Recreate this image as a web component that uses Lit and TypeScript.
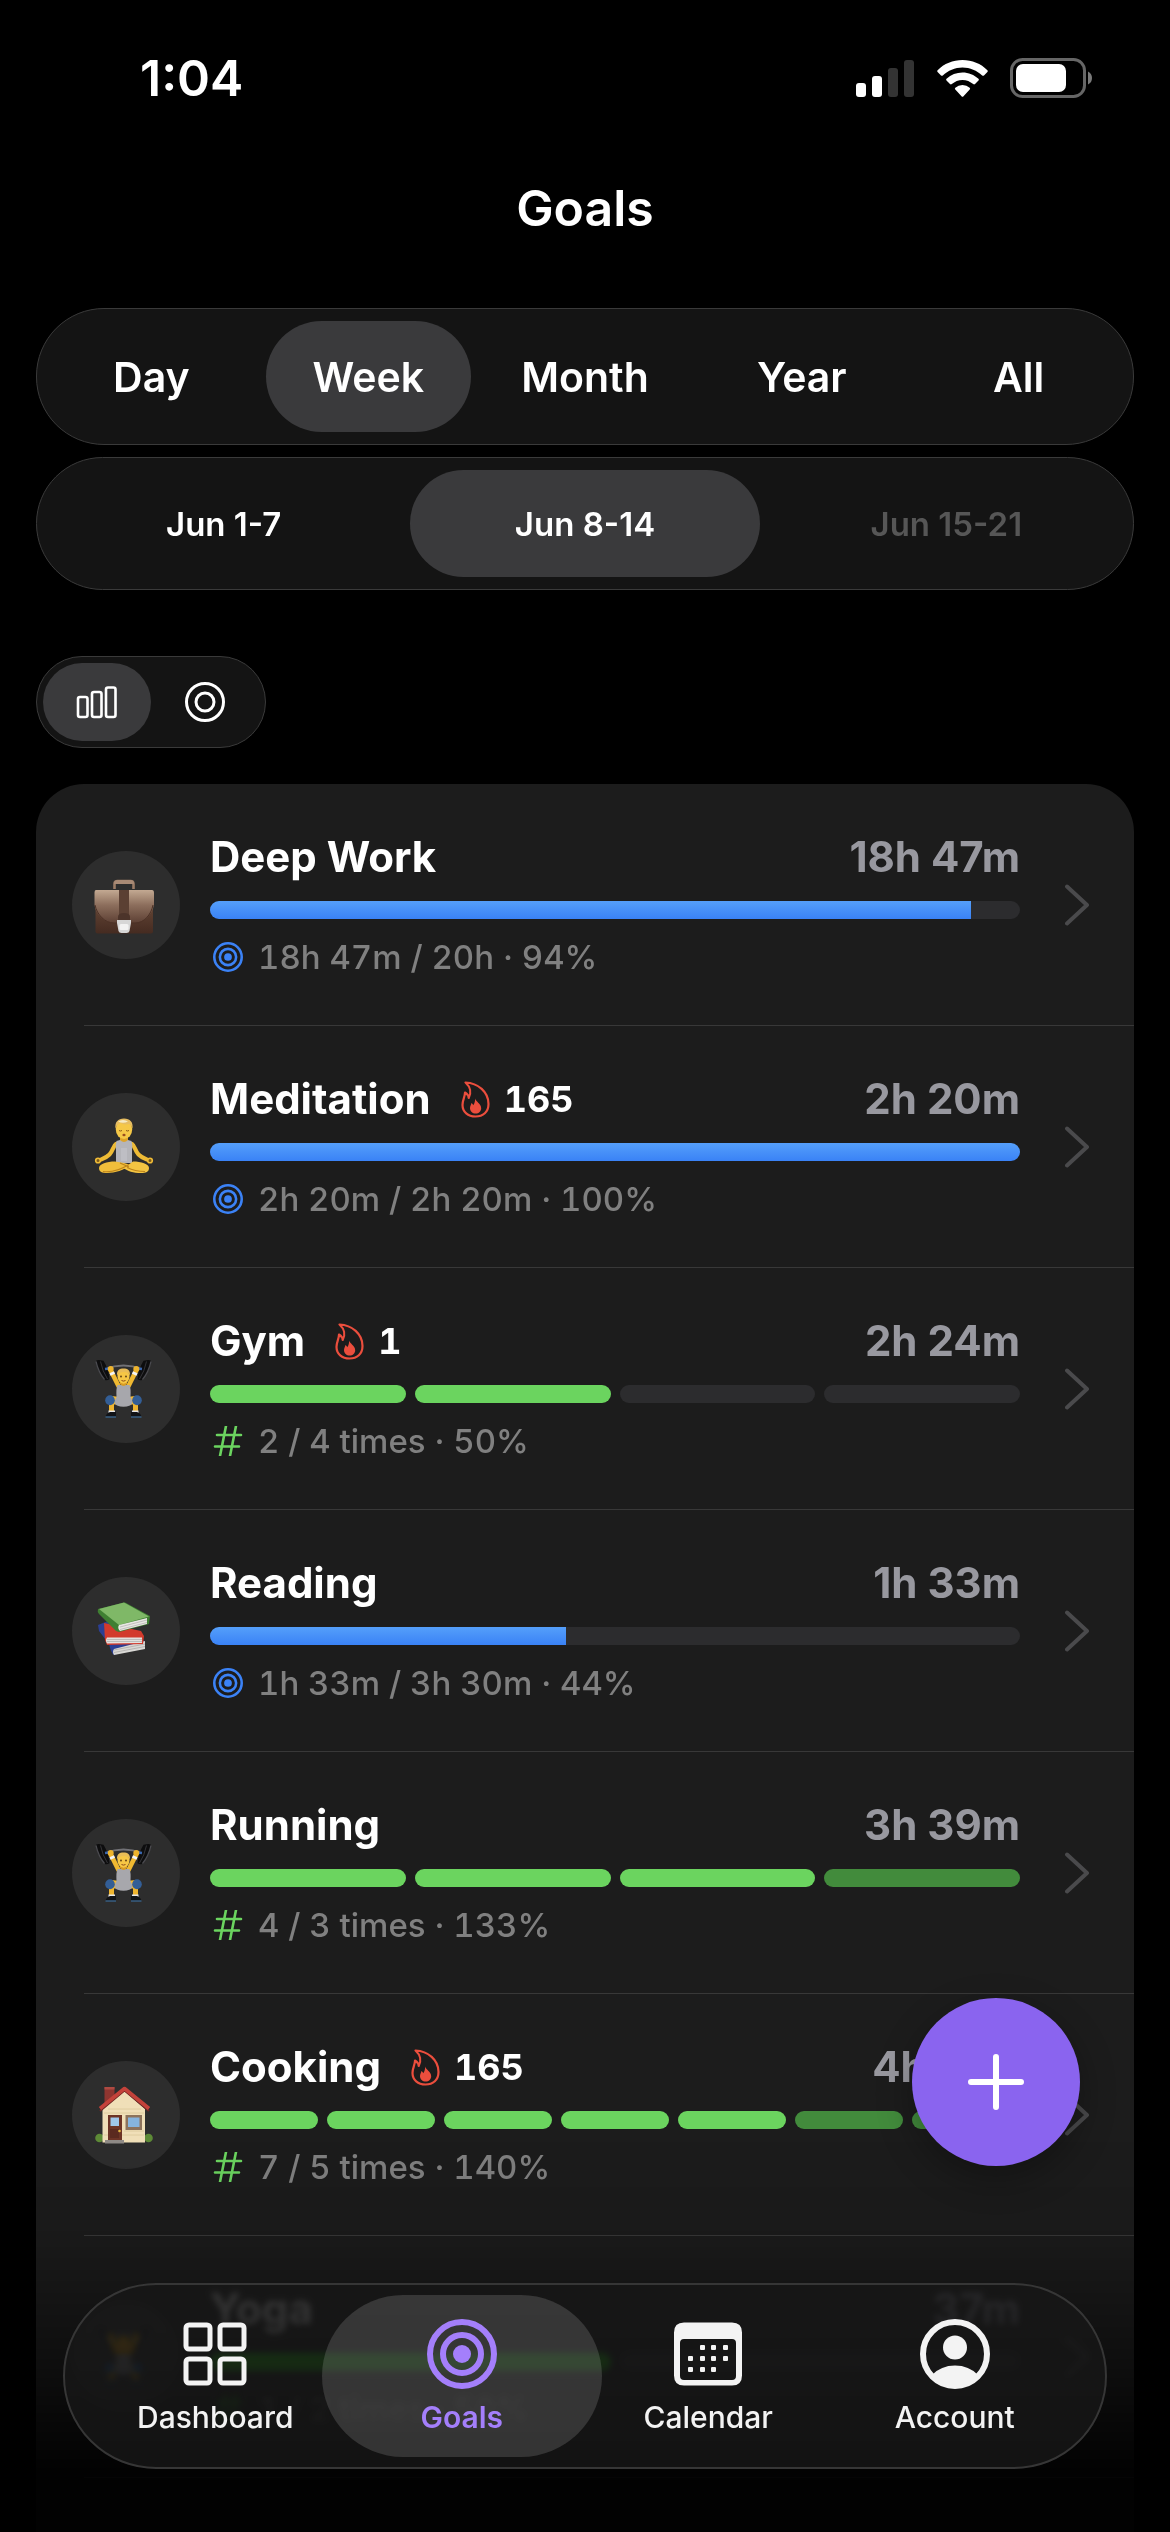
import { LitElement, html, css, svg } from 'lit';
import { customElement, property, state } from 'lit/decorators.js';
import { classMap } from 'lit/directives/class-map.js';

interface Goal {
    name: string;
    icon: string;
    total: string;
    detail: string;
    streak?: number;
    // time goals fill a single bar, count goals fill segments
    percent?: number;
    done?: number;
    target?: number;
}

const goals: Goal[] = [
    { name: 'Deep Work', icon: 'briefcase', total: '18h 47m', detail: '18h 47m / 20h · 94%', percent: 94 },
    { name: 'Meditation', icon: 'lotus', total: '2h 20m', detail: '2h 20m / 2h 20m · 100%', percent: 100, streak: 165 },
    { name: 'Gym', icon: 'lifter', total: '2h 24m', detail: '2 / 4 times · 50%', done: 2, target: 4, streak: 1 },
    { name: 'Reading', icon: 'books', total: '1h 33m', detail: '1h 33m / 3h 30m · 44%', percent: 44 },
    { name: 'Running', icon: 'lifter', total: '3h 39m', detail: '4 / 3 times · 133%', done: 4, target: 3 },
    { name: 'Cooking', icon: 'house', total: '4h 15m', detail: '7 / 5 times · 140%', done: 7, target: 5, streak: 165 },
    { name: 'Yoga', icon: 'lifter', total: '37m', detail: '1 / 2 times · 50%', done: 1, target: 2 },
];

const pictures: Record<string, unknown> = {
    briefcase: svg`
        <defs>
            <linearGradient id="flap" x1="0" y1="0" x2="0" y2="1">
                <stop offset="0" stop-color="#c3a992"/>
                <stop offset="0.45" stop-color="#8d6f5d"/>
                <stop offset="1" stop-color="#5d4034"/>
            </linearGradient>
            <linearGradient id="case" x1="0" y1="0" x2="0" y2="1">
                <stop offset="0" stop-color="#73523f"/>
                <stop offset="1" stop-color="#452b21"/>
            </linearGradient>
        </defs>
        <path d="M20.500 14V9q0-3 3-3h13q3 0 3 3v5" fill="none" stroke="#9c7c66" stroke-width="2.600"/>
        <path d="M20 9q0-4 4-4h12q4 0 4 4z" fill="#a88a75"/>
        <rect x="1.500" y="16" width="57.500" height="42.500" rx="2" fill="url(#case)"/>
        <path d="M2 15h56q2 0 2 3v12c-2 10-10 18-19 18H20C10 48 2 40 .500 30V18q0-3 1.500-3z" fill="url(#flap)"/>
        <path d="M1 30c2 10 10 18 19 18h21c9 0 16-8 18-18" fill="none" stroke="#4b3025" stroke-width="1"/>
        <path d="M25 15h10v26H25z" fill="#5b4033"/>
        <path d="M24 42q0-4 6-4t6 4v3H24z" fill="#4c342a"/>
        <path d="M23 45h14v3l-1.500 8q-.5 2-3 2h-5q-2.500 0-3-2L23 48z" fill="#d6d6d6"/>
        <rect x="25.500" y="49" width="9" height="6" rx="1.500" fill="#f2f2f2"/>`,
    lotus: svg`
        <path d="M22 27c-3 2-3 7-6.500 10.500C12 41 8 42 5 43.500M38 27c3 2 3 7 6.500 10.500C48 41 52 42 55 43.500" fill="none" stroke="#eebb35" stroke-width="4.200" stroke-linecap="round"/>
        <circle cx="4" cy="43.500" r="2.300" fill="#7b5a1c" stroke="#efbb36" stroke-width="1.600"/>
        <circle cx="56" cy="43.500" r="2.300" fill="#7b5a1c" stroke="#efbb36" stroke-width="1.600"/>
        <path d="M26 18h8v7q3 1 3 3H23q0-2 3-3z" fill="#dda32a"/>
        <path d="M22.500 24l3.500-1q4 4 8 0l3.500 1q1.500 4 .5 9v13H22V33q-1-5 .5-9z" fill="#b5b5ba"/>
        <path d="M27 31h6v13h-6z" fill="#c8c8cd" opacity=".5"/>
        <path d="M21 44.500C13 44.500 5 47 5 51c0 4 3 5 8 5 8 0 17-3 24-8l-7-2z" fill="#f0be3b"/>
        <path d="M39 44.500c8 0 16 2.500 16 6.500 0 4-3 5-8 5-8 0-13-2-18-5l5-3z" fill="#f4c542"/>
        <path d="M9 54.500c8 1 18-2 26-7M51 54.500c-7 0-12-1-18-4M26 46l9 4" fill="none" stroke="#bd831a" stroke-width="1.200"/>
        <ellipse cx="30" cy="12.500" rx="8.200" ry="9.500" fill="#f5c847"/>
        <path d="M21.500 12C20.500 5 24 1.500 30 1.500S39.500 5 38.500 12c-.5-3-2-5-4-5-3 1-6 0-8-1-3 1-4.500 3-5 6z" fill="#e6bd62"/>
        <path d="M24 4.500q5-3 10 0-5 2.500-10 0z" fill="#f7ebc4"/>
        <path d="M25 13.500q1.500 1 3 0M32 13.500q1.500 1 3 0" fill="none" stroke="#8a5a18" stroke-width="1"/>
        <ellipse cx="30" cy="18" rx="1.600" ry="1.300" fill="#9a4c1f"/>`,
    lifter: svg`
        <path d="M11 10Q29.500 3 48 10" fill="none" stroke="#717176" stroke-width="1.800"/>
        <path d="M2 1.700q2-1 4.500-.4l3 .4q5 8 6 18.500-2.500 1.500-4.500.8Q3 12 2 1.700zM57 1.700q-2-1-4.500-.4l-3 .4q-5 8-6 18.500 2.500 1.500 4.500.8Q56 12 57 1.700z" fill="#0d0d0e"/>
        <path d="M2 2.500q2.500 11 8.500 18M57 2.500q-2.500 11-8.500 18" fill="none" stroke="#4b4b50" stroke-width="1.200"/>
        <path d="M6.500 2.500q2 10 7 17.500M52.500 2.500q-2 10-7 17.500" fill="none" stroke="#343438" stroke-width="1"/>
        <path d="M11 10l4-.5M48 10l-4-.5" stroke="#3a67b0" stroke-width="2.400"/>
        <path d="M17 12l7.500 15M42 12l-7.500 15" stroke="#f0b931" stroke-width="4.600" stroke-linecap="round"/>
        <path d="M16 15.500l4.500-2M43 15.500l-4.500-2" stroke="#f4f4f6" stroke-width="2.600"/>
        <circle cx="16.700" cy="10" r="3" fill="#eeb42d"/>
        <circle cx="42.300" cy="10" r="3" fill="#eeb42d"/>
        <path d="M17.500 44v10M41.500 44v10" stroke="#efb52f" stroke-width="5"/>
        <path d="M17 41l9 1M42 41l-9 1" stroke="#f2ba35" stroke-width="8"/>
        <path d="M23.500 26h12q1.500 3 1 12l1.500 3q1 4-2 5.500-6.500 2.500-13 0-3-1.500-2-5.500l1.500-3q-.5-9 1-12z" fill="#a7a7ac"/>
        <path d="M26 25q3.500 4 7 0v-3h-7z" fill="#d99c24"/>
        <ellipse cx="29.500" cy="17.500" rx="6" ry="7.200" fill="#f6c745"/>
        <path d="M23 17c-.5-6 2.500-7.500 6.500-7.500s7 1.500 6.500 7.500c-1-3-3-4-6-4-3.500 0-6 1-7 4z" fill="#e9bd57"/>
        <circle cx="27" cy="17.500" r=".9" fill="#5a3a12"/>
        <circle cx="32" cy="17.500" r=".9" fill="#5a3a12"/>
        <path d="M27.500 21.500q2 1.200 4 0" fill="none" stroke="#8c4a1a" stroke-width="1"/>
        <ellipse cx="16" cy="41.300" rx="4.800" ry="5" fill="#335e96"/>
        <ellipse cx="43" cy="41.300" rx="4.800" ry="5" fill="#335e96"/>
        <path d="M14.500 51.500h6.500V55h-6.500zM38 51.500h6.500V55H38z" fill="#e6e6e8"/>
        <path d="M11.500 57.500q1-3.500 4.500-4.500h6v4.500zM47.500 57.500q-1-3.500-4.500-4.500h-6v4.500z" fill="#111317"/>
        <path d="M11.500 58h10.500M37 58h10.500" stroke="#3f78ad" stroke-width="1.200"/>`,
    books: svg`
        <path d="M4 24l10-4 36 20 1 4-31 10q-3-2-5-11L5 30z" fill="#2b3f94"/>
        <path d="M20 48l31-8v8l-31 6q-2-3 0-6z" fill="#d9d8d5"/>
        <path d="M20 49l31-6M20 51.500l31-6" stroke="#a6a5a2" stroke-width=".7"/>
        <path d="M10 22l37 8 3 5-1 8-36 1-2-5z" fill="#d23a2c"/>
        <path d="M13 36.500h35v5.500l-35 .5q-2-3 0-6z" fill="#e2e1de"/>
        <path d="M13 38.500h35M13 40.500h35" stroke="#aeadaa" stroke-width=".7"/>
        <path d="M4 8L30 1.500q2 0 3 1L56 15l-1 8-30 8-3-1L5 13q-2-2-1-5z" fill="#3f7f32"/>
        <path d="M5 8L30 1.500l25 14L25 24z" fill="#7fb867"/>
        <path d="M25 24l28-7v6l-27 7q-3-3-1-6z" fill="#e8e7e4"/>
        <path d="M26 26l27-7M26 28.500l27-7" stroke="#afaeab" stroke-width=".7"/>`,
    house: svg`
        <circle cx="5.500" cy="53" r="4.300" fill="#5d8a36"/>
        <circle cx="54.500" cy="53" r="4.300" fill="#5d8a36"/>
        <path d="M10.500 2h10v16h-10z" fill="#8e3530"/>
        <path d="M10.500 2h10v2.500h-10z" fill="#ae4a42"/>
        <path d="M8.500 24L30.500 6 51 24v33.500H8.500z" fill="#f0dfb8"/>
        <path d="M14 24h33M10 28h40M10 50h40M30 46h20" stroke="#dbc69a" stroke-width=".8"/>
        <path d="M6 26L30.500 5.500 55 26" fill="none" stroke="#6f2724" stroke-width="2"/>
        <path d="M6 23.500L30.500 3.500 55 23.500" fill="none" stroke="#c4423a" stroke-width="3.600" stroke-linejoin="round"/>
        <path d="M14 30h14v25H14z" fill="#6d3426"/>
        <path d="M16.500 32.500h8.500v8.500h-8.500z" fill="#9fc7ea"/>
        <path d="M16 44h9v9h-9z" fill="#5b2a1f"/>
        <circle cx="25.500" cy="46" r="1.300" fill="#e3b53e"/>
        <path d="M31.500 30H48v15H31.500z" fill="#8d735c"/>
        <path d="M34 32.500h11.500V42H34z" fill="#86b4de"/>
        <path d="M11 55h19v3.500H11z" fill="#8f8a86"/>`,
};

const targetIcon = svg`
    <circle cx="35" cy="35" r="32" fill="none" stroke="currentColor" stroke-width="6"/>
    <circle cx="35" cy="35" r="19" fill="none" stroke="currentColor" stroke-width="6"/>
    <circle cx="35" cy="35" r="9" fill="currentColor"/>`;

@customElement('goal-row')
export class GoalRow extends LitElement {
    @property({ attribute: false }) goal!: Goal;

    static styles = [
        css`
            :host {
                display: block;
            }

            .row {
                display: flex;
                align-items: center;
                padding: 48px 45px 48px 36px;
                color: white;
                text-decoration: none;
            }

            .avatar {
                flex: none;
                display: flex;
                align-items: center;
                justify-content: center;
                width: 108px;
                height: 108px;
                margin-right: 30px;
                border-radius: 50%;
                background: #2d2d2d;
            }

            .avatar svg {
                width: 60px;
                height: 60px;
                overflow: visible;
            }

            .body {
                flex: 1;
                min-width: 0;
            }

            .head {
                display: flex;
                align-items: center;
                height: 50px;
                font-size: 42px;
                line-height: 50px;
                font-weight: 700;
            }

            .streak {
                display: flex;
                align-items: center;
                gap: 14px;
                margin-left: 30px;
                font-size: 36px;
            }

            .streak, .detail {
                font-variant-numeric: tabular-nums;
            }

            .streak svg {
                width: 29px;
                height: 37px;
                color: #eb4e3d;
            }

            .total {
                margin-left: auto;
                color: #98989f;
            }

            .track {
                height: 18px;
                margin: 19px 0 18px;
                border-radius: 9px;
                background: #2c2c2e;
                overflow: hidden;
            }

            .fill {
                height: 100%;
                background: linear-gradient(#559ffa, #3a82f6);
            }

            .segments {
                display: flex;
                gap: 9px;
                height: 18px;
                margin: 19px 0 18px;
            }

            .segment {
                flex: 1;
                border-radius: 9px;
                background: #2c2c2e;
            }

            .segment.done {
                background: #6bd45f;
            }

            .segment.extra {
                background: #428b3c;
            }

            .detail {
                display: flex;
                align-items: center;
                gap: 15px;
                padding-left: 3px;
                font-size: 33px;
                line-height: 40px;
                font-weight: 500;
                color: #808080;
            }

            .detail svg {
                width: 30px;
                height: 30px;
            }

            .time {
                color: #3b82f6;
            }

            .count {
                color: #6bd45f;
            }

            .chevron {
                flex: none;
                width: 24px;
                height: 42px;
                margin-left: 45px;
                color: #4a4a4c;
            }

            .divider {
                height: 1px;
                margin-left: 48px;
                background: #383838;
            }
        `
    ];

    renderBar() {
        const { percent, done = 0, target = 0 } = this.goal;
        if (percent !== undefined) {
            return html`<div class="track"><div class="fill" style="width: ${percent}%"></div></div>`;
        }
        const count = Math.max(done, target);
        return html`
            <div class="segments">
                ${Array.from({ length: count }, (_, i) => html`
                    <div class=${classMap({ segment: true, done: i < done, extra: i >= target })}></div>
                `)}
            </div>
        `;
    }

    render() {
        const goal = this.goal;
        return html`
            <a class="row" href="#${goal.name.toLowerCase().replace(' ', '-')}">
                <span class="avatar">
                    <svg viewBox="2 0 60 60" aria-hidden="true">${pictures[goal.icon]}</svg>
                </span>
                <div class="body">
                    <div class="head">
                        <span>${goal.name}</span>
                        ${goal.streak ? html`
                            <span class="streak">
                                <svg viewBox="0 0 29 37" aria-hidden="true">
                                    <path d="M4.500 1.500C17 2 27.500 11 27.500 23c0 8-5.500 12.500-13 12.500S1.500 31 1.500 24c0-5 2.500-8 2.500-12.500 2.500 1.500 3.500 3 3.700 5.500C10.500 12 9.500 6 4.500 1.500z" fill="none" stroke="currentColor" stroke-width="2.200" stroke-linejoin="round"/>
                                    <path d="M14 17.500c1 3.500 6.200 5 6.200 9.700 0 3-2.400 5.300-5.500 5.300S9 30.200 9 27.200c0-2.300 1.200-3.200 1.400-5.200 1 .5 1.600 1.200 1.800 2.200 1.600-2 2-4 1.800-6.700z" fill="currentColor"/>
                                </svg>
                                ${goal.streak}
                            </span>
                        ` : ''}
                        <span class="total">${goal.total}</span>
                    </div>
                    ${this.renderBar()}
                    <div class="detail">
                        ${goal.percent !== undefined
                            ? html`<svg class="time" viewBox="0 0 70 70" aria-hidden="true">${targetIcon}</svg>`
                            : html`
                                <svg class="count" viewBox="0 0 30 30" aria-hidden="true">
                                    <path d="M13 0L7 30M23 0l-6 30M4 9h24M2 20.500h24" fill="none" stroke="currentColor" stroke-width="2.600" stroke-linecap="round"/>
                                </svg>`}
                        <span>${goal.detail}</span>
                    </div>
                </div>
                <svg class="chevron" viewBox="0 0 24 42" aria-hidden="true">
                    <path d="M2 2.500l20 18.500L2 39.500" fill="none" stroke="currentColor" stroke-width="4" stroke-linecap="round" stroke-linejoin="round"/>
                </svg>
            </a>
            <div class="divider"></div>
        `;
    }
}

@customElement('app-root')
export class AppRoot extends LitElement {
    @state() period = 'Week';
    @state() range = 'Jun 8-14';
    @state() view = 'bars';

    static styles = [
        css`
            :host {
                display: flex;
                flex-direction: column;
                min-height: 100vh;
                background: black;
                color: white;
                font-family: Inter, "Liberation Sans", sans-serif;
            }

            button {
                padding: 0;
                border: none;
                background: none;
                color: inherit;
                font: inherit;
                cursor: pointer;
            }

            .status {
                display: flex;
                align-items: center;
                justify-content: space-between;
                height: 60px;
                margin-top: 48px;
                padding: 0 78px 0 140px;
                font-size: 50px;
                font-weight: 600;
            }

            .indicators {
                display: flex;
                align-items: center;
                gap: 22px;
            }

            .indicators svg {
                display: block;
                height: 40px;
            }

            h1 {
                margin: 70px 0;
                font-size: 50px;
                line-height: 60px;
                font-weight: 600;
                text-align: center;
            }

            main {
                flex: 1;
                display: flex;
                flex-direction: column;
                padding: 0 36px;
            }

            .picker {
                display: flex;
                gap: 12px;
                padding: 12px;
                border: 1px solid #3a3a3a;
                border-radius: 68px;
                background: #141414;
            }

            .picker button {
                flex: 1 1 0;
                height: 111px;
                border-radius: 56px;
                font-size: 41px;
                font-weight: 600;
            }

            .picker .selected, .views .selected {
                background: #3a3a3c;
            }

            .ranges {
                margin-top: 12px;
            }

            .picker.ranges button {
                height: 107px;
                font-size: 33px;
            }

            .picker button:disabled {
                color: #565656;
                cursor: default;
            }

            .views {
                display: flex;
                align-self: flex-start;
                margin: 66px 0 36px;
                padding: 6px;
                border: 1px solid #3a3a3a;
                border-radius: 46px;
                background: #141414;
            }

            .views button {
                display: flex;
                align-items: center;
                justify-content: center;
                width: 108px;
                height: 78px;
                border-radius: 39px;
            }

            .views svg {
                width: 42px;
                height: 42px;
            }

            .card {
                flex: 1;
                border-radius: 48px 48px 0 0;
                background: #1c1c1c;
            }

            .card ul {
                margin: 0;
                padding: 0;
                list-style: none;
            }

            .fade {
                position: fixed;
                left: 0;
                right: 0;
                bottom: 0;
                height: 392px;
                background: linear-gradient(transparent, rgba(0, 0, 0, 0.08) 25%, rgba(0, 0, 0, 0.45) 55%, rgba(0, 0, 0, 0.9) 84%);
                pointer-events: none;
            }

            .add {
                position: fixed;
                right: 90px;
                bottom: 366px;
                display: flex;
                align-items: center;
                justify-content: center;
                width: 168px;
                height: 168px;
                border-radius: 50%;
                background: #8a64ef;
                box-shadow: 0 12px 36px rgba(0, 0, 0, 0.3);
            }

            .add svg {
                width: 58px;
                height: 58px;
            }

            .tabs {
                position: fixed;
                left: 63px;
                right: 63px;
                bottom: 63px;
                display: flex;
                padding: 10px 27px;
                border: 2px solid #363636;
                border-radius: 93px;
                background: rgba(23, 23, 23, 0.82);
                backdrop-filter: blur(3px) saturate(2);
            }

            .tab {
                flex: 1 1 0;
                position: relative;
                display: flex;
                flex-direction: column;
                align-items: center;
                gap: 10px;
                padding: 24px 0 22px;
                color: #f3f3f3;
                font-size: 30px;
                line-height: 36px;
                font-weight: 500;
                text-decoration: none;
            }

            .tab svg {
                width: 70px;
                height: 70px;
            }

            .tab.current {
                color: #a47ffb;
                font-weight: 600;
            }

            /* highlight is wider than its column */
            .tab.current::before {
                content: '';
                position: absolute;
                inset: 0 -17px;
                z-index: -1;
                border-radius: 81px;
                background: rgba(255, 255, 255, 0.14);
            }
        `
    ];

    renderStatus() {
        return html`
            <div class="status">
                <span>1:04</span>
                <div class="indicators">
                    <svg width="59" viewBox="0 0 59 40" role="img" aria-label="Signal">
                        <rect x="0" y="25" width="10" height="14" rx="3" fill="white"/>
                        <rect x="16" y="18" width="10" height="21" rx="3" fill="white"/>
                        <rect x="32" y="10" width="10" height="29" rx="3" fill="#333"/>
                        <rect x="48" y="2" width="10" height="37" rx="3" fill="#333"/>
                    </svg>
                    <svg width="51" viewBox="0 0 51 40" role="img" aria-label="Wi-Fi">
                        <path d="M25.500 2C35 2 44 5.700 50.400 12.200q.8.900 0 1.700l-3.400 3.500q-.9.800-1.800 0C40 12.400 33 9.400 25.500 9.400S11 12.400 5.800 17.400q-.9.800-1.800 0L.6 13.900q-.8-.8 0-1.700C7 5.700 16 2 25.500 2z" fill="white"/>
                        <path d="M25.500 14.500c6 0 11.700 2.300 16 6.300q.9.900 0 1.800L38 26.100q-.9.800-1.800 0C33.300 23.400 29.500 21.900 25.500 21.900s-7.800 1.500-10.700 4.200q-.9.800-1.800 0l-3.500-3.500q-.9-.9 0-1.800 6.900-6.300 16-6.300z" fill="white"/>
                        <path d="M25.500 27q4.200 0 7.200 2.700.9.900 0 1.800l-6.200 6.800q-1 1-2 0l-6.200-6.800q-.9-.9 0-1.800Q21.300 27 25.500 27z" fill="white"/>
                    </svg>
                    <svg width="82" viewBox="0 0 82 40" role="img" aria-label="Battery">
                        <rect x="1.500" y="1.500" width="73" height="37" rx="11" fill="none" stroke="#666" stroke-width="3"/>
                        <rect x="6" y="6" width="50" height="28" rx="7" fill="white"/>
                        <path d="M78 13.500q4 2 4 6.500t-4 6.500z" fill="#7a7a7a"/>
                    </svg>
                </div>
            </div>
        `;
    }

    renderPeriods() {
        return html`
            <div class="picker" role="group" aria-label="Period">
                ${['Day', 'Week', 'Month', 'Year', 'All'].map(name => html`
                    <button
                        class=${classMap({ selected: name === this.period })}
                        aria-pressed=${name === this.period}
                        @click="${() => this.period = name}">${name}</button>
                `)}
            </div>
            <div class="picker ranges" role="group" aria-label="Dates">
                ${['Jun 1-7', 'Jun 8-14', 'Jun 15-21'].map(name => html`
                    <button
                        class=${classMap({ selected: name === this.range })}
                        aria-pressed=${name === this.range}
                        ?disabled=${name === 'Jun 15-21'}
                        @click="${() => this.range = name}">${name}</button>
                `)}
            </div>
        `;
    }

    renderViews() {
        return html`
            <div class="views" role="group" aria-label="View">
                <button
                    class=${classMap({ selected: this.view === 'bars' })}
                    aria-label="Bars"
                    aria-pressed=${this.view === 'bars'}
                    @click="${() => this.view = 'bars'}">
                    <svg viewBox="0 0 42 42" fill="none" stroke="white" stroke-width="2.600">
                        <rect x="2" y="16" width="9.500" height="20" rx="2"/>
                        <rect x="16" y="11" width="9.500" height="25" rx="2"/>
                        <rect x="30" y="6.500" width="9.500" height="29.500" rx="2"/>
                    </svg>
                </button>
                <button
                    class=${classMap({ selected: this.view === 'rings' })}
                    aria-label="Rings"
                    aria-pressed=${this.view === 'rings'}
                    @click="${() => this.view = 'rings'}">
                    <svg viewBox="0 0 42 42" fill="none" stroke="white" stroke-width="3">
                        <circle cx="21" cy="21" r="18.500"/>
                        <circle cx="21" cy="21" r="9"/>
                    </svg>
                </button>
            </div>
        `;
    }

    renderTabs() {
        return html`
            <nav class="tabs">
                <a class="tab" href="#dashboard">
                    <svg viewBox="0 0 70 70" fill="none" stroke="currentColor" stroke-width="5">
                        <rect x="6" y="6" width="24" height="24" rx="3"/>
                        <rect x="40" y="6" width="24" height="24" rx="3"/>
                        <rect x="6" y="40" width="24" height="24" rx="3"/>
                        <rect x="40" y="40" width="24" height="24" rx="3"/>
                    </svg>
                    Dashboard
                </a>
                <a class="tab current" href="#goals" aria-current="page">
                    <svg viewBox="0 0 70 70">${targetIcon}</svg>
                    Goals
                </a>
                <a class="tab" href="#calendar">
                    <svg viewBox="0 0 70 70" fill="currentColor">
                        <path fill-rule="evenodd" d="M11 3.500h48q10 0 10 10v43q0 10-10 10H11q-10 0-10-10v-43q0-10 10-10zM11 20q-4 0-4 4v33q0 4 4 4h48q4 0 4-4V24q0-4-4-4z"/>
                        ${[[29, 28], [40, 28], [52, 28], [17, 39], [29, 39], [40, 39], [52, 39], [17, 50], [29, 50], [40, 50]].map(
                            ([x, y]) => svg`<rect x=${x - 2} y=${y - 2} width="5" height="5" rx="1"/>`
                        )}
                    </svg>
                    Calendar
                </a>
                <a class="tab" href="#account">
                    <svg viewBox="0 0 70 70" fill="currentColor">
                        <circle cx="35" cy="35" r="32" fill="none" stroke="currentColor" stroke-width="6"/>
                        <circle cx="35" cy="28.500" r="12"/>
                        <path d="M12 56q9-9.500 23-9.500T58 56Q48 68 35 68T12 56z"/>
                    </svg>
                    Account
                </a>
            </nav>
        `;
    }

    render() {
        return html`
            ${this.renderStatus()}
            <h1>Goals</h1>
            <main>
                ${this.renderPeriods()}
                ${this.renderViews()}
                <section class="card">
                    <ul>
                        ${goals.map(goal => html`<li><goal-row .goal=${goal}></goal-row></li>`)}
                    </ul>
                </section>
            </main>
            <div class="fade"></div>
            <button class="add" aria-label="Add goal">
                <svg viewBox="0 0 58 58" aria-hidden="true">
                    <path d="M29 4v50M4 29h50" stroke="white" stroke-width="6" stroke-linecap="round"/>
                </svg>
            </button>
            ${this.renderTabs()}
        `;
    }
}
